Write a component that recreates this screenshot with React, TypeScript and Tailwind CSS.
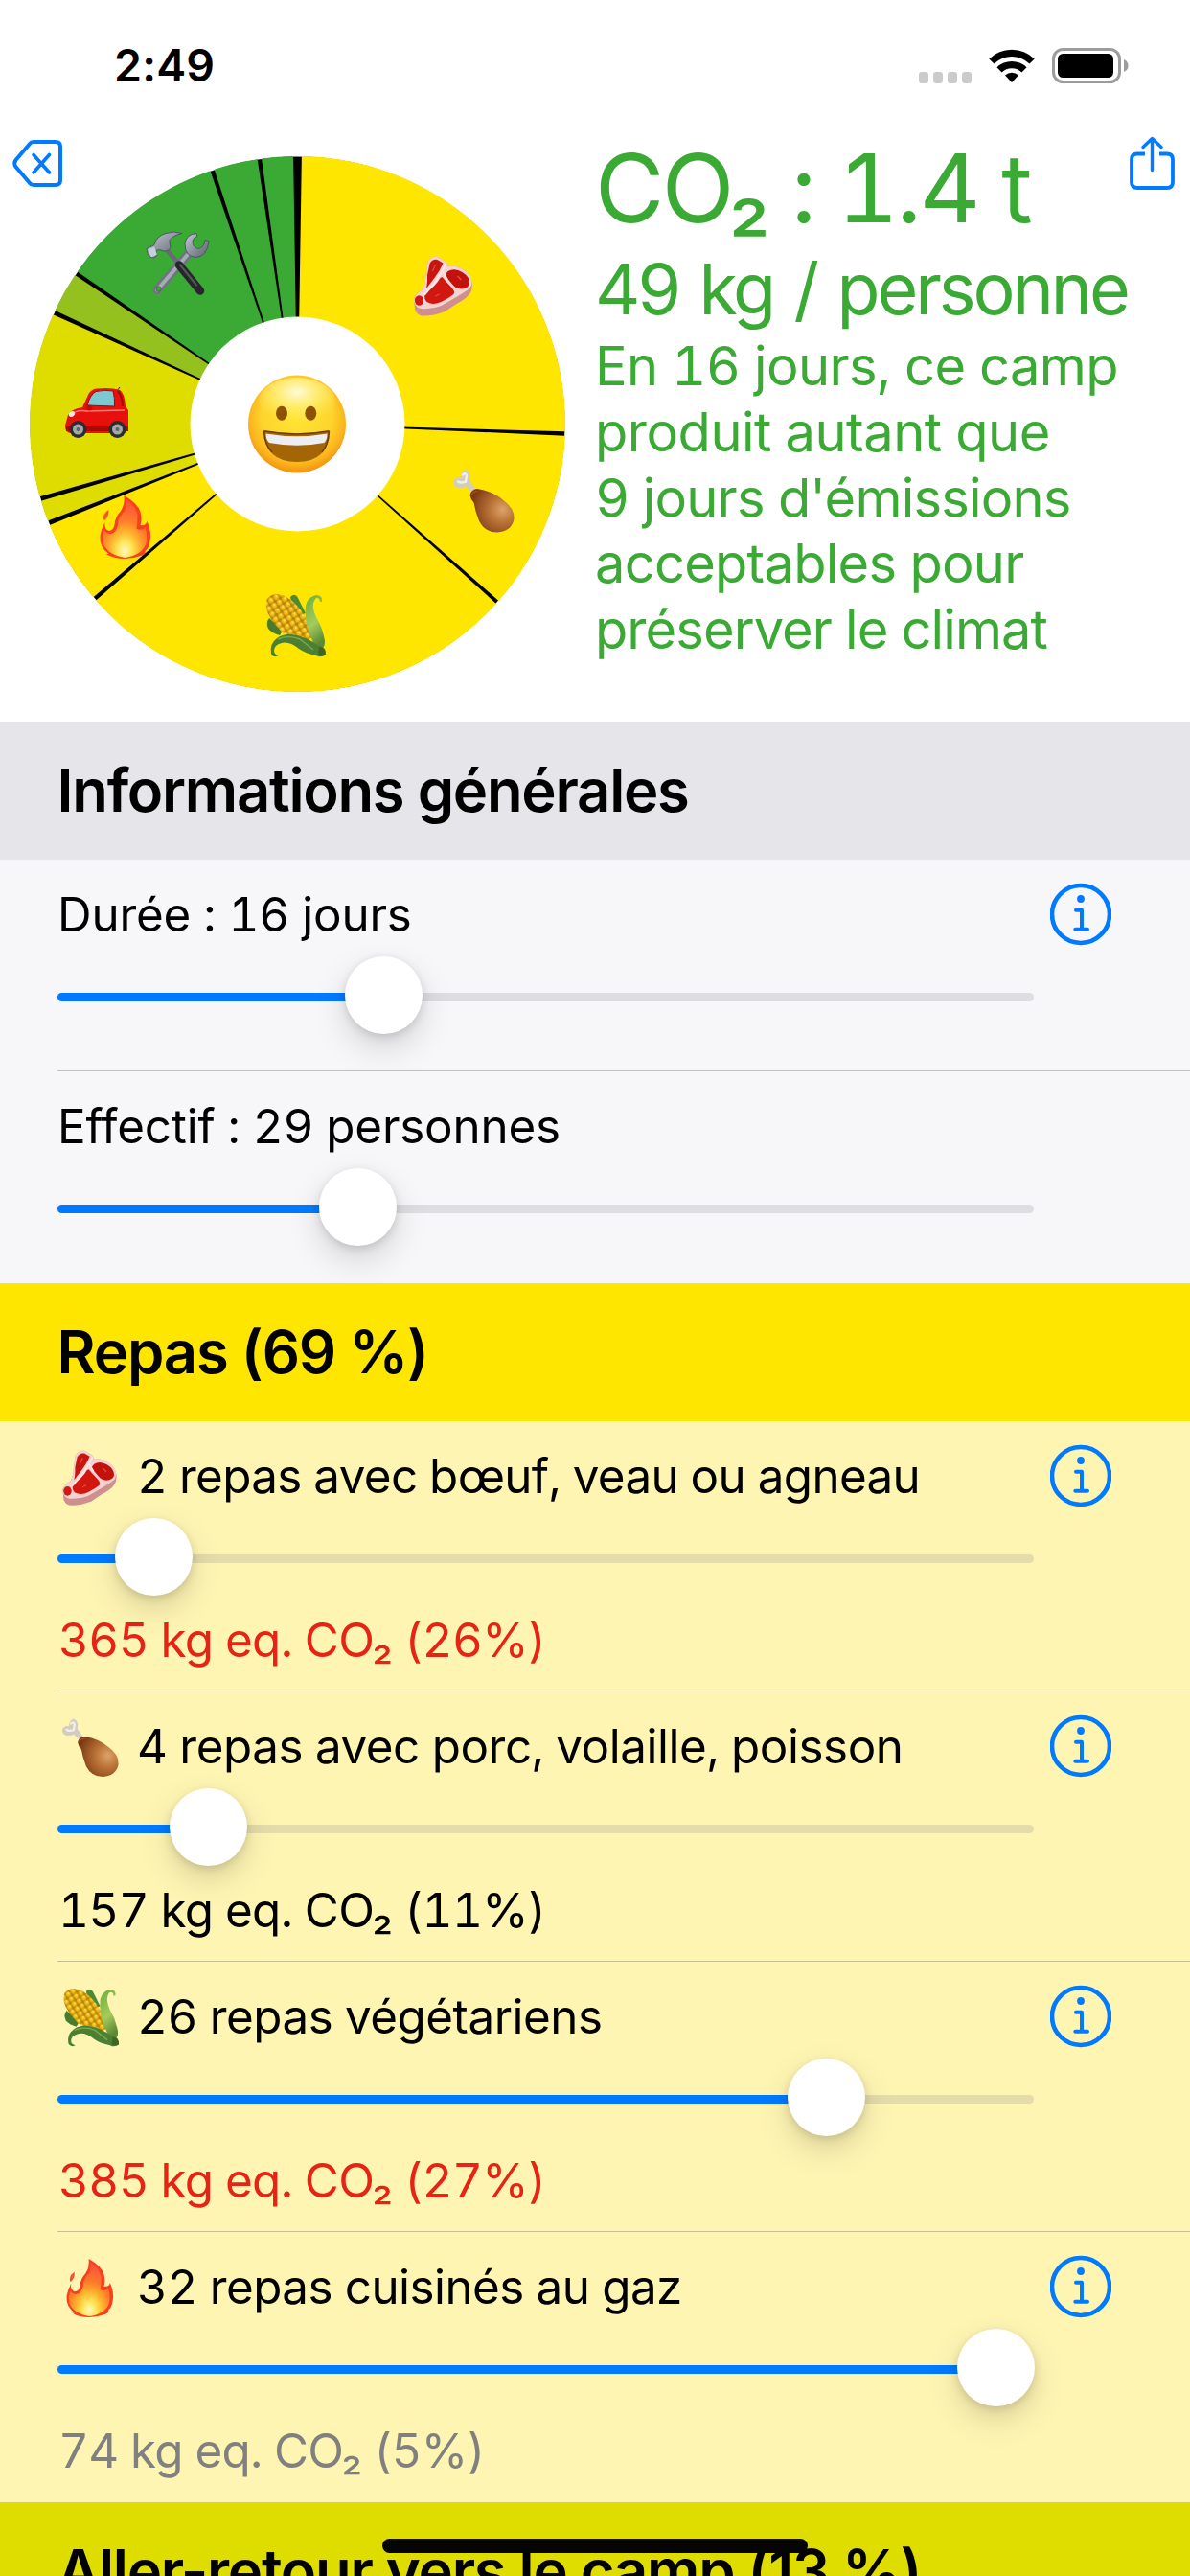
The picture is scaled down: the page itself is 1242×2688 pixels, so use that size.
import type { ReactNode } from "react";

type EmojiProps = { x?: number; y?: number; size?: number };

function Glyph({ x, y, size = 61, children }: EmojiProps & { children: ReactNode }) {
  return (
    <svg x={x} y={y} width={size} height={size} viewBox="0 0 66 66" overflow="visible">
      {children}
    </svg>
  );
}

function Meat(p: EmojiProps) {
  return (
    <Glyph {...p}>
      <path d="M16 8 Q20 2 26 3 L35 8 Q37 10 36 12.500 Q46 11 54 17 Q60 21 62 29 Q63 37 60 41 Q56 47 46 52 L34 60 Q22 65 9 64.500 Q3 62 2.500 57 L1.500 47 Q3 41 11 37 Q14 30 14 22 Z" fill="#cf8f8e" />
      <path d="M16 8 Q20 2 26 3 L35 8 Q37 10 36 12.500 Q46 11 54 17 Q61 21 62 29 Q62 35 57 38 Q51 42 44 46 L30 54 Q20 58 9 57 Q3 56 1.500 49 Q2 41 11 37 Q14 30 14 22 Z" fill="#f6d2d0" />
      <path d="M18 10 Q21 5 26 6 L32 9.500 Q29 17 23 25 L14.500 36 Q16 29 15.500 22 Z" fill="#c9150f" />
      <path d="M37 18 Q44 14 52 19 Q60 24 59.500 31 Q58 36 51 36.500 Q45 36 42 32 Q38 27 33.500 22.500 Z" fill="#c3120c" />
      <path d="M31 24 Q35 29 40 34 Q45 39 43 42 Q38 46 31 49.500 Q22 54 15 50 Q11 46 14 40 Q24 34 29 25 Z" fill="#d2170f" />
      <ellipse cx="7" cy="48.500" rx="4.600" ry="5.200" fill="#d01a12" />
      <path d="M35 11 L25 28 L13 42 M32 19 L36 26" stroke="#fbe6e3" strokeWidth="2" fill="none" strokeLinecap="round" />
      <path d="M47 23 l4 4 M24 11 l-3 7 M24 44 l4 -2" stroke="#e0504a" strokeWidth="1.200" fill="none" />
    </Glyph>
  );
}

function Chicken(p: EmojiProps) {
  return (
    <Glyph {...p}>
      <defs>
        <radialGradient id="leg" cx="0.740" cy="0.480" r="0.720">
          <stop offset="0" stopColor="#dda36a" />
          <stop offset="0.400" stopColor="#bb7438" />
          <stop offset="1" stopColor="#7c3a14" />
        </radialGradient>
      </defs>
      <path d="M9 6 Q11 0 15 1 Q20 4 18 12 L24 20 L20 24 L14 18 Q8 21 3 18 Q-1 13 3 10 Q6 8 9 9 Z" fill="#d3ccc1" />
      <path d="M11 6 Q14 3 15 7 L14 13 Q9 15 6 13" stroke="#f3efe8" strokeWidth="2.500" fill="none" strokeLinecap="round" />
      <path d="M18.500 27 Q20 21 26 20.500 Q43 23 54 33 Q65 41 64.500 52 Q62 65 47 66 Q34 66 28 54 Q24 44 22.500 35 Q19 31 18.500 27 Z" fill="url(#leg)" />
      <path d="M20 27 Q22 23 27 23" stroke="#a04a20" strokeWidth="1.500" fill="none" />
    </Glyph>
  );
}

function Corn(p: EmojiProps) {
  return (
    <Glyph {...p}>
      <defs>
        <pattern id="kernels" width="6.400" height="6.400" patternUnits="userSpaceOnUse" patternTransform="rotate(58)">
          <rect width="6.400" height="6.400" fill="#b98206" />
          <ellipse cx="3.200" cy="3.200" rx="2.900" ry="2.700" fill="#ecb913" />
          <ellipse cx="2.600" cy="2.600" rx="1.400" ry="1.200" fill="#f9db5a" />
        </pattern>
        <linearGradient id="husk" x1="0" y1="0" x2="0.300" y2="1">
          <stop offset="0" stopColor="#6fae3c" />
          <stop offset="0.600" stopColor="#a3cc5c" />
          <stop offset="1" stopColor="#5d8a35" />
        </linearGradient>
      </defs>
      <path d="M28 3 Q33 -2 36 4 L44 20 L38 22 Q29 12 28 3 Z" fill="#4d8a33" />
      <path d="M6 25 Q2 30 5 36 Q9 41 17 43 L20 38 Z" fill="#457d2e" />
      <path d="M3 7 Q6 0 14 0 Q25 1 34 11 Q44 21 49 36 Q52 44 49 47 Q40 50 30 47 Q17 40 8 26 Q1 15 3 7 Z" fill="url(#kernels)" />
      <path d="M61 8 Q62 1 55 1 Q46 3 44 12 Q42 28 50 46 Q54 57 60 58 Q66 54 63 44 Q61 34 55 24 Q49 12 54 5 Q58 2 59 8 Z" fill="url(#husk)" />
      <path d="M16 64 Q10 67 8 62 Q6 52 14 46 Q22 40 35 43 Q47 46 56 53 Q66 55 65 63 Q60 67 55 64 Q44 62 37 57 Q27 49 19 51 Q11 53 11 59 Q11 63 16 64 Z" fill="#4c7f33" />
      <path d="M15 47 Q26 42 38 47 L52 58" stroke="#76aa4a" strokeWidth="1.500" fill="none" />
      <path d="M58 55 Q64 54 65 63 Q61 66 57 63 Z" fill="#40651f" />
    </Glyph>
  );
}

function Fire(p: EmojiProps) {
  return (
    <Glyph {...p}>
      <defs>
        <radialGradient id="flame" cx="0.500" cy="0.880" r="0.850">
          <stop offset="0" stopColor="#fff7c8" />
          <stop offset="0.180" stopColor="#ffe85a" />
          <stop offset="0.380" stopColor="#ffb52e" />
          <stop offset="0.620" stopColor="#ff7a2a" />
          <stop offset="1" stopColor="#f9503c" />
        </radialGradient>
      </defs>
      <path d="M15 15 Q8 19 10 26 Q15 24 15 15 Z" fill="#fa5032" />
      <path d="M31 0 Q45 8 48 17 Q50 25 48 31 Q54 32 55 27 Q60 38 58 48 Q57 55 53 58 Q54 62 48 63 Q40 66 32 66 Q20 66 12 61 L15 61 Q5 54 6 42 Q7 35 11 28 Q10 35 15 37 Q20 37 21 30 Q22 22 27 17 Q32 10 31 0 Z" fill="#f8401f" />
      <path d="M33 4 Q43 11 45 20 Q45 28 44 35 Q51 37 53 33 Q56 44 54 50 Q50 62 32 65 Q14 62 9 50 Q8 43 10 36 Q14 42 20 39 Q25 35 25 26 Q28 19 32 16 Q34 10 33 4 Z" fill="url(#flame)" />
    </Glyph>
  );
}

function Car(p: EmojiProps) {
  return (
    <Glyph {...p}>
      <path d="M54 10 L57 6" stroke="#333" strokeWidth="1" />
      <path d="M0 46 L3 35 Q6 29 18 27 L24 14 Q27 8 33 7.500 Q48 6 57 9 Q62 12 63 26 L66 30 L66 50 Q63 54 58 54 L8 54 Q0 55 0 46 Z" fill="#e8100c" />
      <path d="M23 25 Q26 14 32 10.500 Q42 8.500 50 10 Q52 17 51.500 26 Z" fill="#7cc9d2" stroke="#8e1210" strokeWidth="1" />
      <path d="M55 10 Q60 16 60 26" stroke="#9c0d0d" strokeWidth="2" fill="none" />
      <path d="M4 36 Q12 29 22 31 L62 30" stroke="#ff7a6c" strokeWidth="1.400" fill="none" />
      <path d="M1 47 H66 V52 H1 Z" fill="#a50b0b" />
      <ellipse cx="7" cy="34" rx="3.400" ry="2.600" transform="rotate(-35 7 34)" fill="#f3e9e4" />
      <circle cx="25.500" cy="27.500" r="3" fill="#c40d0b" />
      <circle cx="13.500" cy="50" r="9" fill="#2c2c2e" />
      <circle cx="13.500" cy="50" r="5.500" fill="#a5a8ab" />
      <circle cx="13.500" cy="50" r="2" fill="#5d6064" />
      <circle cx="54.500" cy="50" r="9" fill="#2c2c2e" />
      <circle cx="54.500" cy="50" r="5.500" fill="#a5a8ab" />
      <circle cx="54.500" cy="50" r="2" fill="#5d6064" />
    </Glyph>
  );
}

function Tools(p: EmojiProps) {
  return (
    <Glyph {...p}>
      <defs>
        <linearGradient id="steel" x1="0" y1="0" x2="1" y2="1">
          <stop offset="0" stopColor="#c6ccd6" />
          <stop offset="0.500" stopColor="#8d939f" />
          <stop offset="1" stopColor="#5c616b" />
        </linearGradient>
      </defs>
      <path d="M12 61 L44 24" stroke="#70747e" strokeWidth="9.500" strokeLinecap="round" />
      <path d="M12 61 L44 24" stroke="#a5abb6" strokeWidth="4" strokeLinecap="round" />
      <path d="M53 2 Q42 3 41 13 Q41 26 52 27 Q64 27 66 10 L62 9 Q61 17 55 18 Q49 17 49 10 Q50 6 54 5 Z" fill="url(#steel)" stroke="#4f5560" strokeWidth="1" />
      <circle cx="13.500" cy="60" r="2.600" fill="#3aaa35" stroke="#585d66" strokeWidth="1" />
      <path d="M22 19 L37 37" stroke="#666b76" strokeWidth="5" />
      <path d="M35 35 L57 62" stroke="#26272b" strokeWidth="8.500" strokeLinecap="round" />
      <path d="M36 35 L53 56" stroke="#55575d" strokeWidth="2" strokeLinecap="round" />
      <path d="M1 18 L9 14 Q11 5 21 2 Q30 -1 38 2 Q29 4 25 9 Q25 14 26 17 Q23 22 17 20 Q13 18 11 20 L12 25 Q9 29 5 27 Q1 24 1 18 Z" fill="url(#steel)" stroke="#4f5560" strokeWidth="1" />
      <path d="M2 19 L9 16 L12 24 L6 27 Z" fill="#c3d0de" />
    </Glyph>
  );
}

function Face() {
  return (
    <g>
      <defs>
        <radialGradient id="skin" cx="0.500" cy="0.420" r="0.600">
          <stop offset="0" stopColor="#ffe534" />
          <stop offset="0.600" stopColor="#fdd42c" />
          <stop offset="0.820" stopColor="#fbb41d" />
          <stop offset="1" stopColor="#ee8a0e" />
        </radialGradient>
        <radialGradient id="shine" cx="0.500" cy="0.300" r="0.620">
          <stop offset="0" stopColor="#fffce4" stopOpacity="0.950" />
          <stop offset="0.500" stopColor="#fff690" stopOpacity="0.600" />
          <stop offset="1" stopColor="#fff25c" stopOpacity="0" />
        </radialGradient>
      </defs>
      <circle cx="310" cy="442.500" r="51" fill="url(#skin)" />
      <ellipse cx="310" cy="419" rx="40" ry="25" fill="url(#shine)" />
      <ellipse cx="294" cy="431.300" rx="6" ry="7.500" fill="#8d5207" />
      <ellipse cx="324.300" cy="431.300" rx="6" ry="7.500" fill="#8d5207" />
      <path d="M275.500 449.500 Q310 455.500 343.500 449.500 Q343 482 310 482 Q276.500 482 275.500 449.500 Z" fill="#a46506" />
      <path d="M277.500 452.500 Q310 458 341.500 452.500 Q341.500 459 338.500 462 Q310 467.500 281 462 Q277.500 459 277.500 452.500 Z" fill="#eceef3" />
      <path d="M275.500 449.800 Q276 464 284 472 M343.500 449.800 Q343 464 336 472 M275.500 449.800 Q310 456 343.500 449.800" stroke="#6e3d05" strokeWidth="1.500" fill="none" />
    </g>
  );
}

const CX = 310.5;
const CY = 442.5;
const R = 279.5;

function at(angle: number, radius: number) {
  const a = (angle * Math.PI) / 180;
  return `${(CX + radius * Math.sin(a)).toFixed(2)} ${(CY - radius * Math.cos(a)).toFixed(2)}`;
}

function wedge(from: number, to: number) {
  return `M${CX} ${CY} L${at(from, R)} A${R} ${R} 0 ${to - from > 180 ? 1 : 0} 1 ${at(to, R)} Z`;
}

const slices = [
  { from: 0.9, to: 91.6, color: "#ffe600" },
  { from: 92.5, to: 131.3, color: "#ffe600" },
  { from: 132.1, to: 228.8, color: "#ffe600" },
  { from: 229.7, to: 247.8, color: "#ffe600" },
  { from: 248.8, to: 253.3, color: "#dfdc00" },
  { from: 254.3, to: 294.1, color: "#dfdc00" },
  { from: 295.1, to: 303.8, color: "#95c11f" },
  { from: 304.7, to: 341, color: "#3aaa35" },
  { from: 341.9, to: 351.4, color: "#3aaa35" },
  { from: 352.3, to: 359.1, color: "#3aaa35" },
];

function PieChart() {
  return (
    <svg className="mt-[26px] ml-[30px] block" width="561" height="561" viewBox="30 162 561 561">
      <circle cx={CX} cy={CY} r={R - 0.5} fill="#000" />
      {slices.map((s) => (
        <path key={s.from} d={wedge(s.from, s.to)} fill={s.color} />
      ))}
      <circle cx={CX} cy={CY} r="112" fill="#fff" />
      <Meat x={430.5} y={265} size={66} />
      <Chicken x={472} y={489.5} size={66} />
      <Corn x={275} y={620} size={66} />
      <Fire x={98.5} y={517} size={66} />
      <Car x={68} y={398} size={66} />
      <Tools x={152} y={241.5} size={66} />
      <Face />
    </svg>
  );
}

function StatusBar() {
  return (
    <div className="flex h-[136px] items-center justify-between pr-[64px] pl-[119px]">
      <span className="text-[46.5px] leading-none font-semibold tracking-[0.2px]">2:49</span>
      <div className="flex items-center">
        <div className="mt-[25px] mr-[18px] flex gap-[5px]">
          {[0, 1, 2, 3].map((i) => (
            <span key={i} className="h-[12px] w-[10px] rounded-[3px] bg-[#cbcbcb]" />
          ))}
        </div>
        <svg className="mr-[18px]" width="48" height="37" viewBox="0 0 48 37">
          <path d="M0.300 11.500 A33.500 33.500 0 0 1 47.700 11.500 L42.500 16.500 A26.500 26.500 0 0 0 5.500 16.500 Z" />
          <path d="M8.500 20.300 A22 22 0 0 1 39.500 20.300 L34.500 25.500 A15 15 0 0 0 13.500 25.500 Z" />
          <path d="M17 28.500 A10.500 10.500 0 0 1 31 28.500 L24 36 Z" />
        </svg>
        <svg width="80" height="37" viewBox="0 0 80 37">
          <rect x="1.500" y="1.500" width="69" height="34" rx="10" fill="none" stroke="#9c9c9c" strokeWidth="3" />
          <rect x="6" y="6" width="58" height="25" rx="5.500" />
          <path d="M75 12 Q79.500 14 79.500 18.500 Q79.500 23 75 25 Z" fill="#9c9c9c" />
        </svg>
      </div>
    </div>
  );
}

function BackspaceIcon() {
  return (
    <svg width="56" height="56" viewBox="10 142 56 56" fill="none" stroke="#007aff" strokeWidth="4" strokeLinecap="round" strokeLinejoin="round">
      <path d="M35 148 H58 Q63 148 63 153 V188 Q63 193 58 193 H35 Q32.500 193 31 191 L16.500 174 Q14 170.500 16.500 167 L31 150 Q32.500 148 35 148 Z" />
      <path d="M35 161.500 L51.500 180 M51.500 161.500 L35 180" strokeWidth="3.600" />
    </svg>
  );
}

function ShareIcon() {
  return (
    <svg width="52" height="60" viewBox="1176 140 52 60" fill="none" stroke="#007aff" strokeWidth="3.800" strokeLinejoin="round">
      <path d="M1195 160.500 H1187 Q1181 160.500 1181 166.500 V190 Q1181 196 1187 196 H1218 Q1224 196 1224 190 V166.500 Q1224 160.500 1218 160.500 H1210" />
      <path d="M1202.500 145 V177.500 M1193 153.500 L1202.500 144.500 L1212 153.500" strokeWidth="3.400" strokeLinecap="round" />
    </svg>
  );
}

function InfoIcon() {
  return (
    <svg width="64" height="66" viewBox="0 0 64 66" fill="none" stroke="#007aff">
      <circle cx="32" cy="33" r="30" strokeWidth="4.600" />
      <circle cx="32" cy="17" r="3.900" fill="#007aff" stroke="none" />
      <path d="M27 28.800 H33 V48.800 M26.300 48.800 H39" strokeWidth="4" strokeLinecap="round" strokeLinejoin="round" />
    </svg>
  );
}

function Slider({ position }: { position: number }) {
  return (
    <div className="relative mt-[22px] ml-[60px] h-[9px] w-[1019px] rounded-full bg-[rgba(120,120,128,0.2)]">
      <div className="h-full rounded-full bg-[#007aff]" style={{ width: position }} />
      <div
        className="absolute -top-[38px] h-[81px] w-[81px] rounded-full bg-white shadow-[0_14px_34px_rgba(0,0,0,0.15),0_3px_10px_rgba(0,0,0,0.13)]"
        style={{ left: position - 40.5 }}
      />
    </div>
  );
}

type RowProps = {
  label: string;
  position: number;
  labelClass: string;
  info?: boolean;
  icon?: ReactNode;
  total?: string;
  totalClass?: string;
  last?: boolean;
};

function Row({ label, position, labelClass, info, icon, total, totalClass = "", last }: RowProps) {
  return (
    <div className={total ? "relative h-[282px] overflow-hidden" : "relative h-[221px] overflow-hidden"}>
      <div className="flex h-[117px] items-center justify-between pr-[82px] pl-[60px]">
        <div className="flex items-center">
          {icon && <span className="mr-[18px] ml-[4px] block h-[61px] w-[61px]">{icon}</span>}
          <span className={`-mt-[3px] text-[49.3px] leading-[60px] whitespace-pre tabular-nums ${labelClass}`}>{label}</span>
        </div>
        {info && (
          <button className="-mt-[3px] block" aria-label="Informations">
            <InfoIcon />
          </button>
        )}
      </div>
      <Slider position={position} />
      {total && (
        <p className={`mt-[50px] ml-[61px] text-[49.3px] leading-[60px] whitespace-pre tabular-nums ${totalClass}`}>{total}</p>
      )}
      {!last && <div className="absolute right-0 bottom-0 left-[60px] h-px bg-[rgba(60,60,67,0.29)]" />}
    </div>
  );
}

function SectionHeader({ title, className }: { title: string; className: string }) {
  return (
    <h2 className={`flex h-[144px] items-center pl-[59.5px] text-[61.5px] leading-none font-semibold whitespace-pre ${className}`}>
      {title}
    </h2>
  );
}

export default function App() {
  return (
    <div className="relative h-[2688px] w-[1242px] overflow-hidden bg-white font-['Inter',sans-serif] text-black">
      <StatusBar />
      <div className="relative flex h-[617px]">
        <div className="w-[621px] shrink-0">
          <PieChart />
        </div>
        <div className="whitespace-pre text-[#3aaa35]">
          <p className="h-[120px] text-[99px] leading-[120px] tracking-[-2.5px] tabular-nums">CO₂ : 1.4 t</p>
          <p className="h-[92px] text-[73.5px] leading-[92px] tracking-[-3.1px] [word-spacing:4px]">49 kg / personne</p>
          <div className="text-[56px] leading-[68.75px] tabular-nums">
            <p className="tracking-[-0.57px]">En 16 jours, ce camp</p>
            <p className="tracking-[-0.48px]">produit autant que</p>
            <p className="tracking-[-0.8px]">9 jours d'émissions</p>
            <p className="tracking-[-0.75px]">acceptables pour</p>
            <p className="tracking-[-0.93px]">préserver le climat</p>
          </div>
        </div>
        <button className="absolute top-[6px] left-[10px]" aria-label="Effacer">
          <BackspaceIcon />
        </button>
        <button className="absolute top-[4px] right-[14px]" aria-label="Partager">
          <ShareIcon />
        </button>
      </div>

      <SectionHeader title="Informations générales" className="bg-[#e5e5ea] tracking-[-1.25px]" />
      <div className="bg-[#f7f7fa]">
        <Row label="Durée : 16 jours" labelClass="tracking-[-0.15px]" position={340.5} info />
        <Row label="Effectif : 29 personnes" labelClass="tracking-[-0.18px]" position={313.5} last />
      </div>

      <SectionHeader title="Repas (69 %)" className="bg-[#ffe600] tracking-[-1.15px]" />
      <div className="bg-[#fff5b3]">
        <Row
          icon={<Meat />}
          label="2 repas avec bœuf, veau ou agneau"
          labelClass="tracking-[-0.62px]"
          position={100.5}
          info
          total="365 kg eq. CO₂ (26%)"
          totalClass="text-[#e62314] tracking-[-0.65px]"
        />
        <Row
          icon={<Chicken />}
          label="4 repas avec porc, volaille, poisson"
          labelClass="tracking-[-0.42px]"
          position={157.5}
          info
          total="157 kg eq. CO₂ (11%)"
          totalClass="text-black tracking-[-0.65px]"
        />
        <Row
          icon={<Corn />}
          label="26 repas végétariens"
          labelClass="tracking-[-0.47px]"
          position={802.5}
          info
          total="385 kg eq. CO₂ (27%)"
          totalClass="text-[#e62314] tracking-[-0.65px]"
        />
        <Row
          icon={<Fire />}
          label="32 repas cuisinés au gaz"
          labelClass="tracking-[-0.5px]"
          position={979.5}
          info
          total="74 kg eq. CO₂ (5%)"
          totalClass="text-[#808080] tracking-[-0.7px]"
          last
        />
      </div>

      <SectionHeader title="Aller-retour vers le camp (13 %)" className="bg-[#dfdc00] tracking-[-1.25px]" />
      <div className="absolute bottom-[24px] left-[399px] h-[15px] w-[444px] rounded-full bg-[#050505]" />
    </div>
  );
}
